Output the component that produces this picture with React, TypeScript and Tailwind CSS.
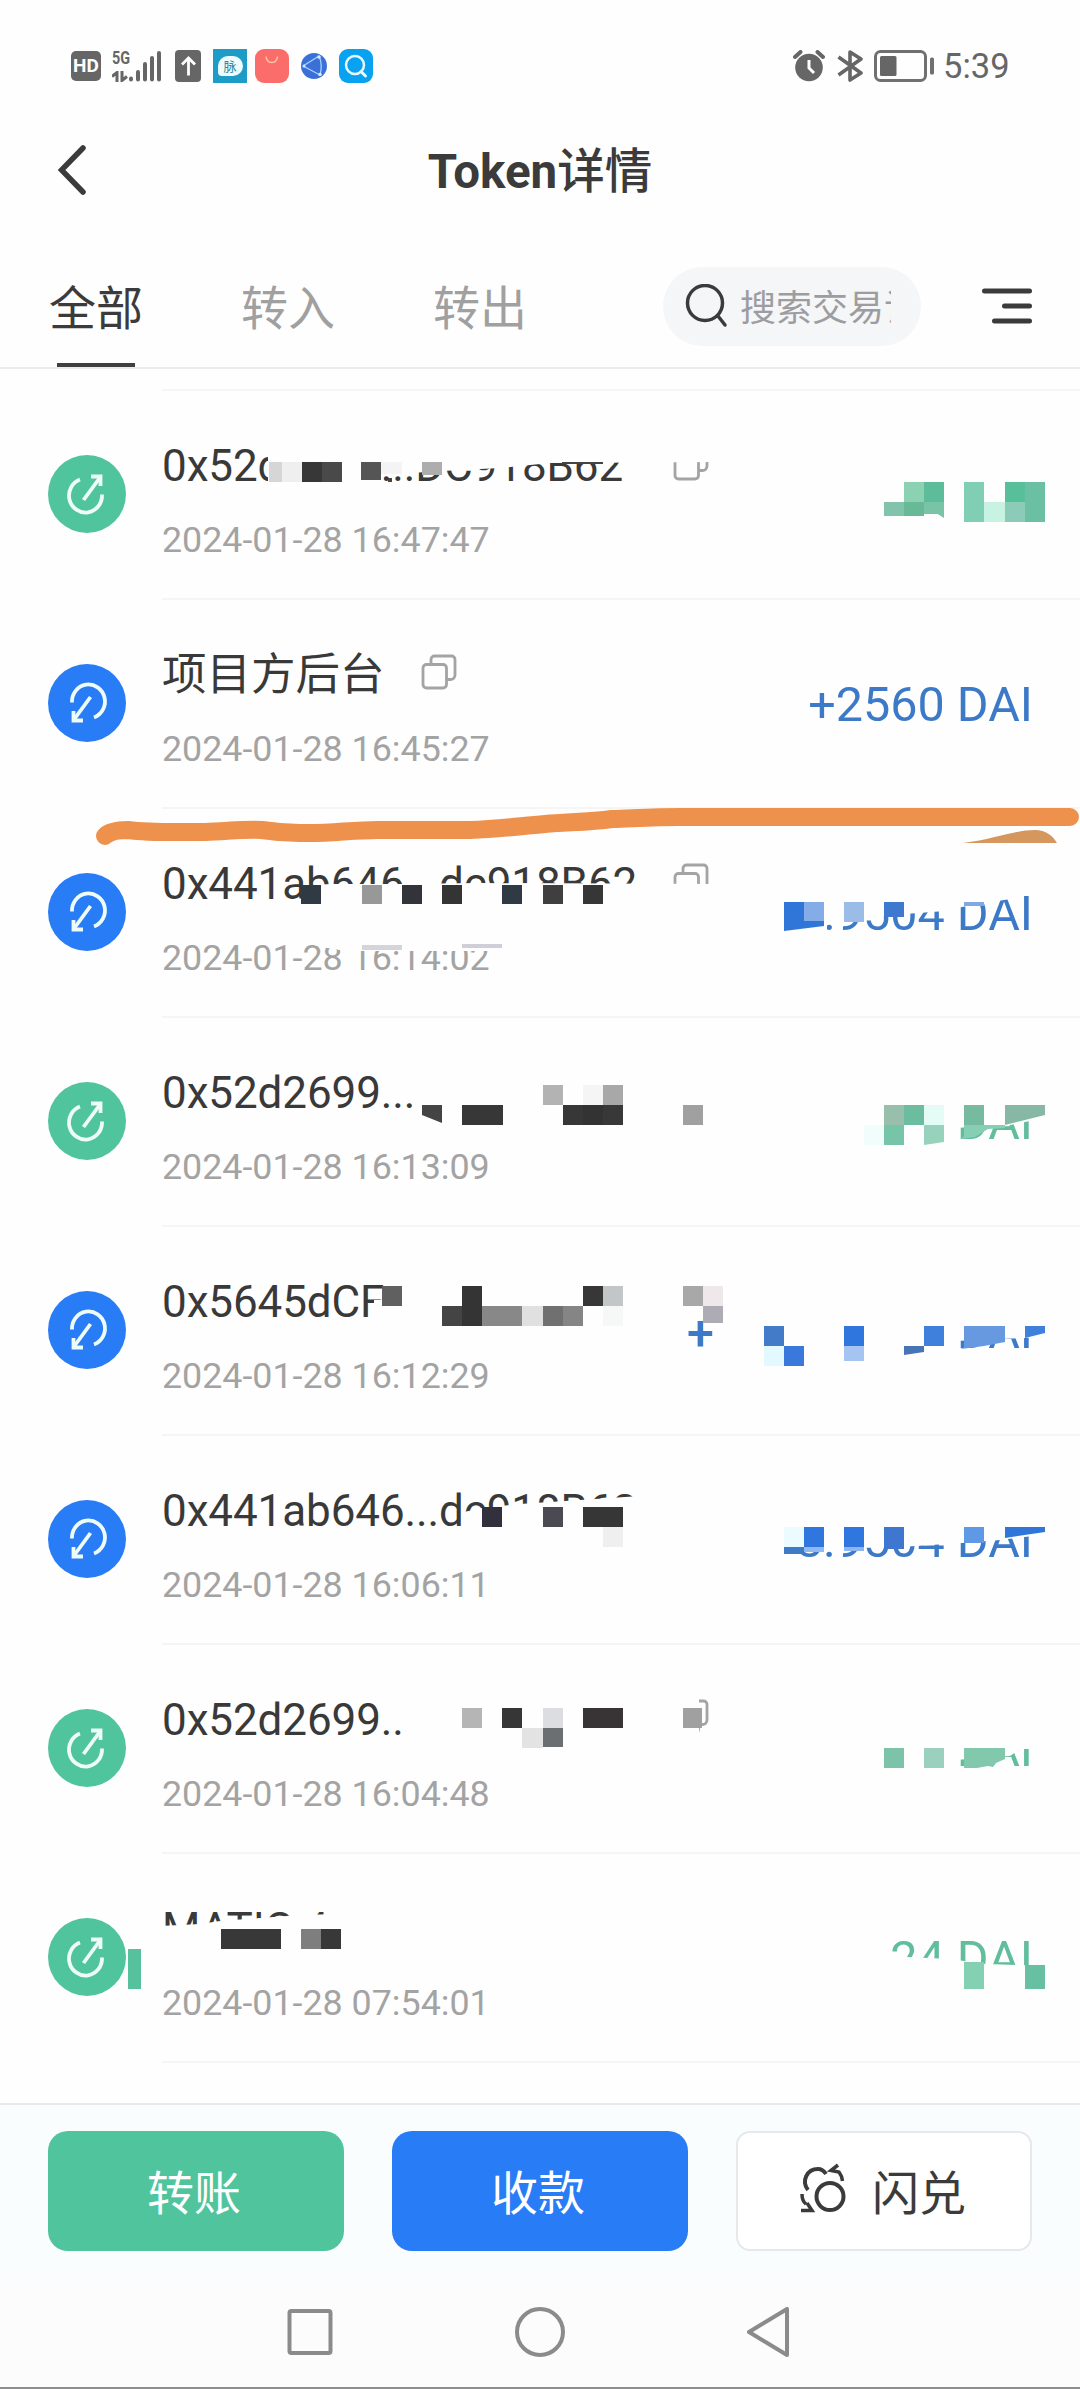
import { clsx } from "clsx";

type Tx = {
  kind: "in" | "out";
  title: string;
  date: string;
  prefix?: string;
  amount?: string;
  copy?: boolean;
  long?: boolean;
};

const TRANSACTIONS: Tx[] = [
  { kind: "out", title: "0x52d2699...DC918B62", date: "2024-01-28 16:47:47", copy: true, long: true },
  { kind: "in", title: "项目方后台", date: "2024-01-28 16:45:27", amount: "+2560 DAI", copy: true },
  { kind: "in", title: "0x441ab646...dc918B62", date: "2024-01-28 16:14:02", amount: "8.9504 DAI", copy: true, long: true },
  { kind: "out", title: "0x52d2699...", date: "2024-01-28 16:13:09", amount: "DAI" },
  { kind: "in", title: "0x5645dCF", date: "2024-01-28 16:12:29", prefix: "+", amount: "DAI" },
  { kind: "in", title: "0x441ab646...dc918B62", date: "2024-01-28 16:06:11", amount: "8.9504 DAI" },
  { kind: "out", title: "0x52d2699..", date: "2024-01-28 16:04:48", amount: "DAI", copy: true, long: true },
  { kind: "out", title: "MATIC 4", date: "2024-01-28 07:54:01", amount: "24 DAI" },
];

// White areas hiding parts of the text: [points]
const COVERS: string[] = [
  // row 1
  "268,440 720,440 720,462 550,463 500,468 442,471 380,475 380,484 340,484 268,484",
  // row 3
  "301,886 330,884 400,884 480,883 720,884 720,912 301,912",
  "305,938 500,938 500,951 345,951 322,947 305,943",
  "780,885 1017,885 1017,898 985,903 962,907 945,911 905,914 880,917 840,918 827,922 827,935 780,935",
  // row 4
  "955,1096 1050,1096 1050,1117 1030,1121 1010,1125 955,1128",
  // row 5
  "374,1300 386,1300 386,1326 374,1326",
  "955,1300 1050,1300 1050,1336 1025,1338 955,1341",
  "955,1349 1050,1349 1050,1365 955,1365",
  // row 6
  "464,1512 482,1508 520,1504 580,1500 640,1496 640,1530 464,1530",
  "780,1515 1050,1515 1050,1534 1000,1540 962,1543 900,1547 780,1549",
  // row 7
  "670,1690 699,1690 699,1740 670,1740",
  "955,1720 1050,1720 1050,1749 1020,1749 1010,1756 955,1760",
  "955,1767 1050,1767 1050,1785 955,1785",
  // row 8
  "160,1926 200,1924 220,1921 260,1918 300,1915 340,1914 340,1955 160,1955",
  "885,1956 950,1959 985,1964 1050,1966 1050,1990 885,1990",
];

// Mosaic cells: [x, y, width, height, fill]
const CELLS: [number, number, number, number, string][] = [
  // row 1
  [269, 462, 13, 20, "#d6d6d6"],
  [282, 462, 20, 20, "#efefef"],
  [302, 462, 20, 20, "#373737"],
  [322, 462, 20, 20, "#494949"],
  [361, 462, 20, 18, "#555555"],
  [381, 462, 21, 12, "#f4f4f4"],
  [388, 478, 4, 4, "#444444"],
  [422, 462, 20, 13, "#adadad"],
  [562, 462, 41, 2, "#444444"],
  [904, 482, 20, 20, "#8bd2b3"],
  [924, 482, 20, 20, "#5dbd9b"],
  [884, 502, 20, 14, "#82c4ab"],
  [904, 502, 20, 14, "#68b998"],
  [924, 502, 20, 12, "#79c3a6"],
  [964, 482, 20, 40, "#80cfb4"],
  [984, 502, 21, 20, "#c8f3e2"],
  [1005, 482, 20, 20, "#57c09a"],
  [1005, 502, 20, 20, "#8ccbb8"],
  [1025, 482, 20, 40, "#6bc0a3"],
  // row 3
  [301, 885, 20, 19, "#2f3a45"],
  [362, 885, 20, 19, "#989898"],
  [402, 885, 20, 19, "#333439"],
  [442, 885, 20, 19, "#343434"],
  [502, 885, 20, 19, "#2f3a45"],
  [543, 885, 20, 19, "#3f3f3f"],
  [583, 885, 20, 19, "#363636"],
  [362, 945, 40, 5, "#d4d4da"],
  [462, 944, 40, 4, "#cfcfd8"],
  [804, 902, 20, 20, "#84ade8"],
  [844, 902, 20, 20, "#9bbce6"],
  [884, 902, 20, 15, "#3f79cf"],
  [964, 902, 20, 4, "#7fa8e4"],
  // row 4
  [462, 1105, 41, 20, "#373737"],
  [543, 1085, 20, 20, "#b3b3b3"],
  [583, 1085, 20, 20, "#f5f5f5"],
  [603, 1085, 20, 20, "#a8a8a8"],
  [563, 1105, 20, 20, "#373737"],
  [583, 1105, 20, 20, "#333333"],
  [603, 1105, 20, 20, "#383838"],
  [683, 1105, 20, 20, "#a0a0a0"],
  [884, 1105, 20, 20, "#97bfac"],
  [904, 1105, 20, 20, "#6cbd9f"],
  [924, 1105, 20, 20, "#e4fbf6"],
  [864, 1125, 20, 20, "#f0fdfa"],
  [884, 1125, 20, 20, "#76c5a8"],
  [964, 1105, 20, 20, "#76baa0"],
  // row 5
  [382, 1286, 20, 20, "#606060"],
  [462, 1286, 20, 40, "#343434"],
  [442, 1306, 20, 20, "#444444"],
  [482, 1306, 40, 20, "#888888"],
  [522, 1306, 21, 20, "#e0e0e0"],
  [543, 1306, 20, 20, "#707070"],
  [563, 1306, 20, 20, "#858585"],
  [583, 1286, 20, 20, "#373737"],
  [603, 1286, 20, 20, "#c3c6c6"],
  [603, 1306, 20, 20, "#f6f8f8"],
  [683, 1286, 20, 20, "#a8a8a8"],
  [703, 1286, 20, 20, "#efe8ea"],
  [703, 1306, 20, 17, "#adabb3"],
  [764, 1326, 20, 20, "#447bc9"],
  [764, 1346, 20, 20, "#e4f8ff"],
  [784, 1346, 20, 20, "#3b78dc"],
  [844, 1326, 20, 20, "#2f76df"],
  [844, 1346, 20, 15, "#a5c4f2"],
  [924, 1326, 20, 20, "#3f80dc"],
  // row 6
  [482, 1507, 20, 20, "#31303c"],
  [543, 1507, 20, 20, "#4b4a53"],
  [583, 1507, 40, 20, "#363636"],
  [603, 1527, 20, 20, "#efefef"],
  [784, 1527, 20, 20, "#ecfbff"],
  [784, 1547, 20, 7, "#3f7ac6"],
  [804, 1527, 20, 20, "#2f76df"],
  [804, 1547, 20, 5, "#8fb9f0"],
  [844, 1527, 20, 20, "#2f76df"],
  [844, 1547, 20, 4, "#8fb5ee"],
  [884, 1527, 20, 22, "#3f76cf"],
  [964, 1527, 20, 16, "#5f98e4"],
  // row 7
  [462, 1708, 20, 20, "#b5b5b5"],
  [502, 1708, 20, 20, "#363636"],
  [543, 1708, 20, 20, "#dcdde0"],
  [583, 1708, 40, 20, "#383436"],
  [522, 1728, 21, 20, "#e3e3e3"],
  [543, 1728, 20, 19, "#6c6f72"],
  [683, 1708, 19, 20, "#a0a0a0"],
  [884, 1748, 20, 20, "#7dc3a9"],
  [924, 1748, 20, 20, "#9bcfbe"],
  // row 8
  [221, 1929, 60, 20, "#383838"],
  [301, 1929, 20, 20, "#7e7e7e"],
  [321, 1929, 20, 20, "#383838"],
  [128, 1949, 13, 40, "#55c29d"],
  [964, 1962, 20, 27, "#83d0b3"],
  [1025, 1965, 20, 24, "#66c0a1"],
];

// Mosaic cells whose edge is cut at a slant: [points, fill]
const SHARDS: [string, string][] = [
  ["924,513 936,513 944,518 944,510 924,510", "#79c3a6"],
  ["784,902 804,902 804,921 824,921 824,926 784,931", "#2f76d8"],
  ["422,1105 442,1105 442,1123 422,1115", "#444444"],
  ["924,1125 944,1125 944,1142 924,1145", "#97d2bd"],
  ["1005,1105 1045,1105 1045,1115 1005,1125", "#86b8a5"],
  ["964,1125 1005,1125 1005,1128 988,1129 975,1137 961,1139 964,1136", "#86cfb4"],
  ["904,1346 924,1346 924,1352 904,1355", "#4674b4"],
  ["964,1326 1005,1326 1005,1342 984,1346 961,1349 964,1347", "#6699e0"],
  ["1025,1326 1045,1326 1045,1333 1025,1338", "#3f80dc"],
  ["1005,1527 1045,1527 1045,1532 1005,1538", "#2f76d8"],
  ["964,1748 1005,1748 1005,1759 996,1763 993,1767 988,1766 977,1768 964,1768", "#82c8ad"],
];

function RedactionLayer() {
  return (
    <svg className="pointer-events-none absolute inset-0" width="1080" height="2389" viewBox="0 0 1080 2389" fill="none">
      {COVERS.map((points) => (
        <polygon key={points} points={points} fill="#fefefe" />
      ))}
      {CELLS.map(([x, y, w, h, fill]) => (
        <rect key={`${x}-${y}-${w}`} x={x} y={y} width={w} height={h} fill={fill} shapeRendering="crispEdges" />
      ))}
      {SHARDS.map(([points, fill]) => (
        <polygon key={points} points={points} fill={fill} />
      ))}
      <path
        d="M105 836 C110 831 118 830 128 830 C150 833 180 832 205 832 C230 831 245 829 262 830 C275 832 285 833 300 833 C330 834 350 830 378 830 H470 C500 829 520 826 545 824 C570 822 590 822 612 819 C640 818 655 817 680 817 H1070"
        stroke="#ee914c"
        strokeWidth="18"
        strokeLinecap="round"
      />
      <path d="M963 843 C995 839 1015 830 1035 830 C1046 830 1053 836 1057 843 Z" fill="#d6975e" />
    </svg>
  );
}

function DirectionIcon({ kind }: { kind: Tx["kind"] }) {
  return (
    <div
      className={clsx(
        "flex size-[78px] shrink-0 items-center justify-center rounded-full",
        kind === "out" ? "bg-[#50c49d]" : "rotate-180 bg-[#287cf6]"
      )}
    >
      <svg viewBox="0 0 78 78" className="size-[78px]" fill="none" stroke="#eefcf8" strokeWidth="3.800">
        <path d="M32 24.500 A16.500 17 0 1 0 54 39.500" />
        <path d="M35.500 45 L52 22.500" />
        <path d="M43 21.500 H52.500 V31" />
      </svg>
    </div>
  );
}

function CopyIcon() {
  return (
    <svg viewBox="0 0 36 36" className="-mt-1.5 size-9 shrink-0" fill="none" stroke="#a4a4a4" strokeWidth="2.800">
      <rect x="2" y="10.500" width="23.500" height="23.500" rx="3.500" />
      <path d="M10 10 V5.500 A3.500 3.500 0 0 1 13.500 2 H30.500 A3.500 3.500 0 0 1 34 5.500 V21 A4.500 4.500 0 0 1 29.500 25.500 H26" />
    </svg>
  );
}

function TxRow({ tx }: { tx: Tx }) {
  return (
    <div className="flex h-[209px] pl-12">
      <div className="mt-[66px]">
        <DirectionIcon kind={tx.kind} />
      </div>
      <div className="ml-9 flex flex-1 justify-between border-t-2 border-[#f5f5f5] pr-[47px]">
        <div className="pt-[49px] whitespace-nowrap">
          <div className="flex h-[52px] items-center gap-[36px]">
            <span
              className={clsx(
                "leading-[52px] text-[#393939]",
                tx.kind === "in" && tx.copy && !tx.long ? "text-[44.500px]" : "text-[44px] tracking-[-0.1px]",
                tx.long && "w-[475px]"
              )}
            >
              {tx.title}
            </span>
            {tx.copy && <CopyIcon />}
          </div>
          <div className="mt-[26px] text-[35.800px] leading-[44px] text-[#a3a3a3]">{tx.date}</div>
        </div>
        <div
          className={clsx(
            "mt-[77px] flex h-14 text-[48.500px] leading-[56px] whitespace-nowrap",
            tx.kind === "in" ? "text-[#3c7ac8]" : "text-[#62bd9c]",
            tx.prefix && "w-[346px] justify-between"
          )}
        >
          {tx.prefix && <span className="mt-0.5 font-medium">{tx.prefix}</span>}
          <span>{tx.amount}</span>
        </div>
      </div>
    </div>
  );
}

function StatusBar() {
  return (
    <div className="flex h-[132px] items-center pr-[71px] pl-[71px] text-[#666666]">
      <div className="flex h-[30px] w-[30px] items-center justify-center rounded-[5px] bg-[#666666] text-[19px] font-bold text-white">
        HD
      </div>
      <div className="ml-[11px] flex h-8 w-[50px] items-end">
        <div className="flex w-[17px] flex-col justify-between self-stretch">
          <span className="origin-left scale-x-[0.8] text-[18px] leading-4 font-bold">5G</span>
          <svg viewBox="0 0 16 11" className="h-[11px] w-4" fill="none" stroke="#666666" strokeWidth="3">
            <path d="M0 5.500 L5 1.500 V11 M10 0 V9.500 L15 5.500" />
          </svg>
        </div>
        <svg viewBox="0 0 33 32" className="h-8 w-[33px]" fill="none" stroke="#666666" strokeWidth="4" strokeLinecap="round">
          <path d="M2 28.500 V29.500 M9 22 V29.500 M16 14 V29.500 M23 8 V29.500 M30 3 V29.500" />
        </svg>
      </div>
      <div className="ml-[13px] flex h-[32px] w-[26px] items-center justify-center rounded bg-[#666666]">
        <svg viewBox="0 0 26 32" className="h-8 w-[26px]" fill="none" stroke="white" strokeWidth="2.800">
          <path d="M13.500 25.500 V8 M7 14.500 L13.500 8 L20 14.500" />
        </svg>
      </div>
      <div className="ml-3 flex size-[34px] items-center justify-center bg-[#1c9cc6]">
        <div className="relative flex h-[20px] w-[25px] items-center justify-center rounded-[10px] rounded-bl-sm bg-[#effcff] text-[13px] leading-none text-[#2d8aa5]">
          脉
        </div>
      </div>
      <svg viewBox="0 0 34 34" className="ml-2 size-[34px]" fill="none">
        <rect width="34" height="34" rx="9" fill="#fb6d6a" />
        <path d="M11 7.500 C12 15.500 21.500 15.500 22.500 7.500" stroke="#ffc4a0" strokeWidth="1.600" />
      </svg>
      <svg viewBox="0 0 26 26" className="ml-3 size-[26px]" fill="none">
        <circle cx="13" cy="13" r="13" fill="#3a70d8" />
        <path d="M2 13 L18 3 M19 22 L2 13 M18 3 Q22 12 19 22" stroke="#a8d5ff" strokeWidth="1.300" />
        <circle cx="18" cy="4" r="1.800" fill="#d5ecff" />
        <circle cx="19" cy="21.500" r="1.800" fill="#d5ecff" />
        <circle cx="3" cy="13" r="1.500" fill="#d5ecff" />
      </svg>
      <svg viewBox="0 0 34 34" className="ml-3 size-[34px]" fill="none">
        <rect width="34" height="34" rx="9" fill="#08a2f0" />
        <circle cx="16" cy="16" r="9" stroke="#e8faff" strokeWidth="2.500" />
        <path d="M22 22.500 L26.500 27" stroke="#e8faff" strokeWidth="3" strokeLinecap="round" />
      </svg>

      <svg viewBox="0 0 32 32" className="ml-auto size-8" fill="none">
        <circle cx="16" cy="17.500" r="13.800" fill="#666666" />
        <path d="M2 7 L7.500 2 M24.500 2 L30 7" stroke="#666666" strokeWidth="4" strokeLinecap="round" />
        <path d="M16 10 V18 L21 23" stroke="white" strokeWidth="3" />
      </svg>
      <svg viewBox="0 0 26 34" className="ml-3 h-[34px] w-[26px]" fill="none" stroke="#666666" strokeWidth="3.600" strokeLinejoin="round">
        <path d="M1.500 8 L24 24 L13 31 V3 L24 10 L1.500 26" />
      </svg>
      <svg viewBox="0 0 60 32" className="ml-[11px] h-8 w-[60px]" fill="none">
        <rect x="1.500" y="1.500" width="50" height="29" rx="5" stroke="#707070" strokeWidth="3" />
        <rect x="6" y="6" width="16.500" height="20" rx="1.500" fill="#666666" />
        <rect x="56" y="7.500" width="4" height="17" rx="1.500" fill="#707070" />
      </svg>
      <span className="ml-[9px] w-[66px] text-[34.500px] leading-10 whitespace-nowrap">5:39</span>
    </div>
  );
}

export default function App() {
  return (
    <div className="relative flex h-[2389px] w-[1080px] flex-col overflow-hidden bg-[#fefefe] font-[Roboto,'Noto_Sans_CJK_SC',sans-serif]">
      <StatusBar />

      {/* Title bar */}
      <div className="grid h-[80px] grid-cols-[120px_1fr_120px] items-center">
        <svg viewBox="0 0 28 50" className="-mt-1 ml-[58px] h-[50px] w-7" fill="none" stroke="#3b3b3b" strokeWidth="5.500" strokeLinecap="round">
          <path d="M25 3 L3.500 25 L25 47" />
        </svg>
        <h1 className="text-center text-[47.500px] leading-[60px] font-bold text-[#3b3b3b]">
          Token<span className="font-medium">详情</span>
        </h1>
      </div>

      {/* Tabs and search */}
      <div className="flex h-[157px] border-b-2 border-[#ececec] pr-12 pl-[49px]">
        <div className="flex gap-[98px] text-[47px] leading-[60px] text-[#a0a0a0]">
          <div className="flex w-[94px] flex-col items-center pt-[67px] text-[#3b3b3b]">
            全部
            <span className="mt-auto h-1 w-[78px] bg-[#3f3f3f]" />
          </div>
          <div className="w-[94px] pt-[67px]">转入</div>
          <div className="w-[94px] pt-[67px]">转出</div>
        </div>
        <div className="mt-[55px] ml-auto flex h-[79px] w-[258px] items-center rounded-full bg-[#f5f6f7] pl-[22px]">
          <svg viewBox="0 0 44 46" className="h-[46px] w-11 shrink-0" fill="none" stroke="#3b3b3b" strokeWidth="3.500" strokeLinecap="round">
            <circle cx="20" cy="19" r="17.500" />
            <path d="M33 32 L40 41" />
          </svg>
          <span className="mt-1 ml-[11px] w-[151px] overflow-hidden text-[36px] leading-[50px] whitespace-nowrap text-[#9d9da1]">
            搜索交易记录
          </span>
        </div>
        <svg viewBox="0 0 50 36" className="mt-[76px] ml-[61px] h-9 w-[50px]" stroke="#3b3b3b" strokeWidth="5" strokeLinecap="round">
          <path d="M2.500 3 H47.500 M22.500 18 H47.500 M12.500 33 H47.500" />
        </svg>
      </div>

      {/* Transaction list */}
      <div className="flex h-[1734px] flex-col pt-5">
        {TRANSACTIONS.map((tx) => (
          <TxRow key={tx.date} tx={tx} />
        ))}
        <div className="ml-[162px] border-t-2 border-[#f5f5f5]" />
      </div>

      {/* Action buttons */}
      <div className="flex h-[182px] shrink-0 gap-12 border-t-2 border-[#e8e9e9] bg-[#fafdfe] px-12 pt-[26px] text-[47px] leading-none">
        <button className="flex h-[120px] w-[296px] items-center justify-center rounded-[20px] bg-[#50c49d] pt-1 pr-1 text-white">转账</button>
        <button className="flex h-[120px] w-[296px] items-center justify-center rounded-[20px] bg-[#287cf6] pt-1 pr-1 text-white">收款</button>
        <button className="flex h-[120px] w-[296px] items-center justify-center gap-6 rounded-[14px] border-2 border-[#e6e9ea] bg-white pt-1 pr-1 text-[#3b3b3b]">
          <svg viewBox="0 0 50 52" className="-mt-2 h-[52px] w-[50px]" fill="none" stroke="#3b3b3b" strokeWidth="4">
            <circle cx="32" cy="33.500" r="13.500" />
            <path d="M10 27 C3 18 9 6 20 6 C24 6 26 8 28 11" />
            <path d="M40 2 L33 7.500 L41 9 Q44 13 44.500 18" strokeWidth="3.500" />
            <path d="M4 31 Q4 38 8 41 M3 47.500 H14 L9 40" strokeWidth="3.500" />
          </svg>
          闪兑
        </button>
      </div>

      {/* System navigation */}
      <div className="flex flex-1 items-start justify-center gap-[182px] border-b-2 border-[#8d8d8d] bg-[#fcfcfc] pt-[22px]">
        <svg viewBox="0 0 46 50" className="h-[50px] w-[46px]" fill="none" stroke="#8b8b8b" strokeWidth="4">
          <rect x="2.500" y="4" width="41" height="42" rx="2" />
        </svg>
        <svg viewBox="0 0 50 50" className="size-[50px]" fill="none" stroke="#8b8b8b" strokeWidth="4">
          <circle cx="25" cy="25" r="23" />
        </svg>
        <svg viewBox="0 0 46 50" className="h-[50px] w-[46px]" fill="none" stroke="#8b8b8b" strokeWidth="4" strokeLinejoin="round">
          <path d="M40 2 V48 L2 25 Z" />
        </svg>
      </div>

      <RedactionLayer />
    </div>
  );
}
